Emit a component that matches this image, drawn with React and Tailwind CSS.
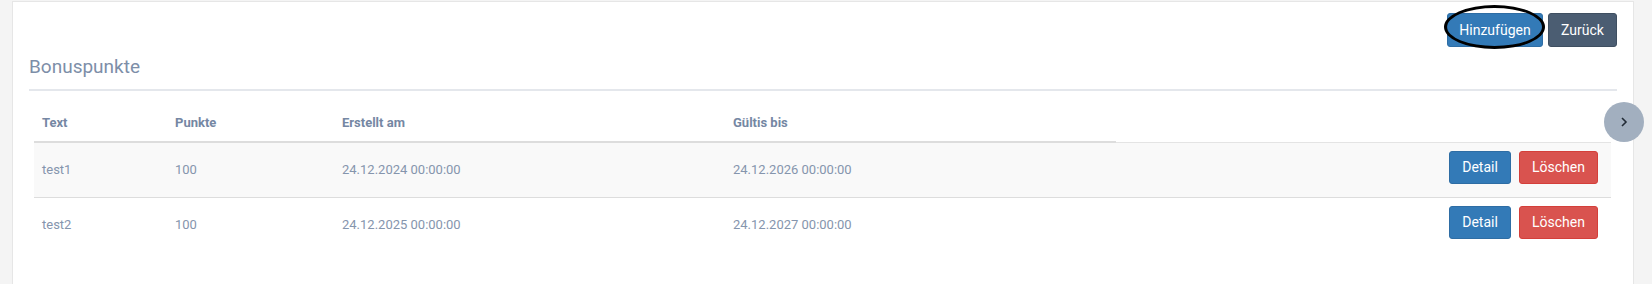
import React from 'react';

const rows = [
  { text: 'test1', punkte: 100, erstellt: '24.12.2024 00:00:00', gueltig: '24.12.2026 00:00:00' },
  { text: 'test2', punkte: 100, erstellt: '24.12.2025 00:00:00', gueltig: '24.12.2027 00:00:00' },
];

const App = () => {
  return (
    <div className="relative h-[284px] w-[1652px] overflow-hidden bg-[#f4f4f4] pl-[12px] pt-[1px] font-['Roboto',sans-serif]">
      <div className="h-[300px] w-[1622px] border border-[#e6e6e6] bg-white px-[16px] pt-[11px]">
        {/* actions */}
        <div className="flex justify-end gap-[5px]">
          <div className="relative">
            <button className="h-[34px] w-[96px] rounded-[3px] border border-[#2e6da4] bg-[#337ab7] text-[14px] text-white">
              Hinzufügen
            </button>
            <span className="pointer-events-none absolute left-[-3px] top-[-8px] h-[44px] w-[101px] rounded-[50%] border-[3px] border-black"></span>
          </div>
          <button className="h-[34px] w-[69px] rounded-[3px] border border-[#3f4f61] bg-[#4b5d72] text-[14px] text-white">
            Zurück
          </button>
        </div>

        {/* heading */}
        <div className="flex h-[44px] items-center border-b-2 border-[#e4e7ec] pb-[2px]">
          <h2 className="text-[19px] font-normal text-[#7d8ea8]">Bonuspunkte</h2>
        </div>

        {/* table */}
        <table className="mx-[5px] mt-[14px] w-[1577px] border-collapse text-[13px]">
          <thead>
            <tr className="h-[37px] text-left text-[#7587a3]">
              <th className="w-[133px] border-b-2 border-[#dddddd] px-[8px] font-bold">Text</th>
              <th className="w-[167px] border-b-2 border-[#dddddd] px-[8px] font-bold">Punkte</th>
              <th className="w-[391px] border-b-2 border-[#dddddd] px-[8px] font-bold">Erstellt am</th>
              <th className="w-[391px] border-b-2 border-[#dddddd] px-[8px] font-bold">Gültis bis</th>
              <th className="border-b border-[#e4e4e4]"></th>
            </tr>
          </thead>
          <tbody>
            {rows.map((r, i) => (
              <tr key={r.text} className={`h-[55px] border-b border-[#dddddd] text-[#8595ad] ${i === 0 ? 'bg-[#f9f9f9]' : 'border-b-0 bg-white'}`}>
                <td className="px-[8px]">{r.text}</td>
                <td className="px-[8px]">{r.punkte}</td>
                <td className="px-[8px]">{r.erstellt}</td>
                <td className="px-[8px]">{r.gueltig}</td>
                <td className="pr-[13px]">
                  <div className="flex justify-end gap-[8px] pb-[5px]">
                    <button className="h-[33px] w-[62px] rounded-[3px] border border-[#2e6da4] bg-[#337ab7] text-[14px] text-white">
                      Detail
                    </button>
                    <button className="h-[33px] w-[79px] rounded-[3px] border border-[#d43f3a] bg-[#d9534f] text-[14px] text-white">
                      Löschen
                    </button>
                  </div>
                </td>
              </tr>
            ))}
          </tbody>
        </table>
      </div>

      {/* scroll arrow */}
      <div className="absolute left-[1604px] top-[102px] flex h-[40px] w-[40px] items-center justify-center rounded-full bg-[#a2afbf]">
        <svg width="10" height="12" viewBox="0 0 10 12" fill="none">
          <path d="M3 2 L7 6 L3 10" stroke="#222b36" strokeWidth="1.6" />
        </svg>
      </div>
    </div>
  );
};

export default App;
